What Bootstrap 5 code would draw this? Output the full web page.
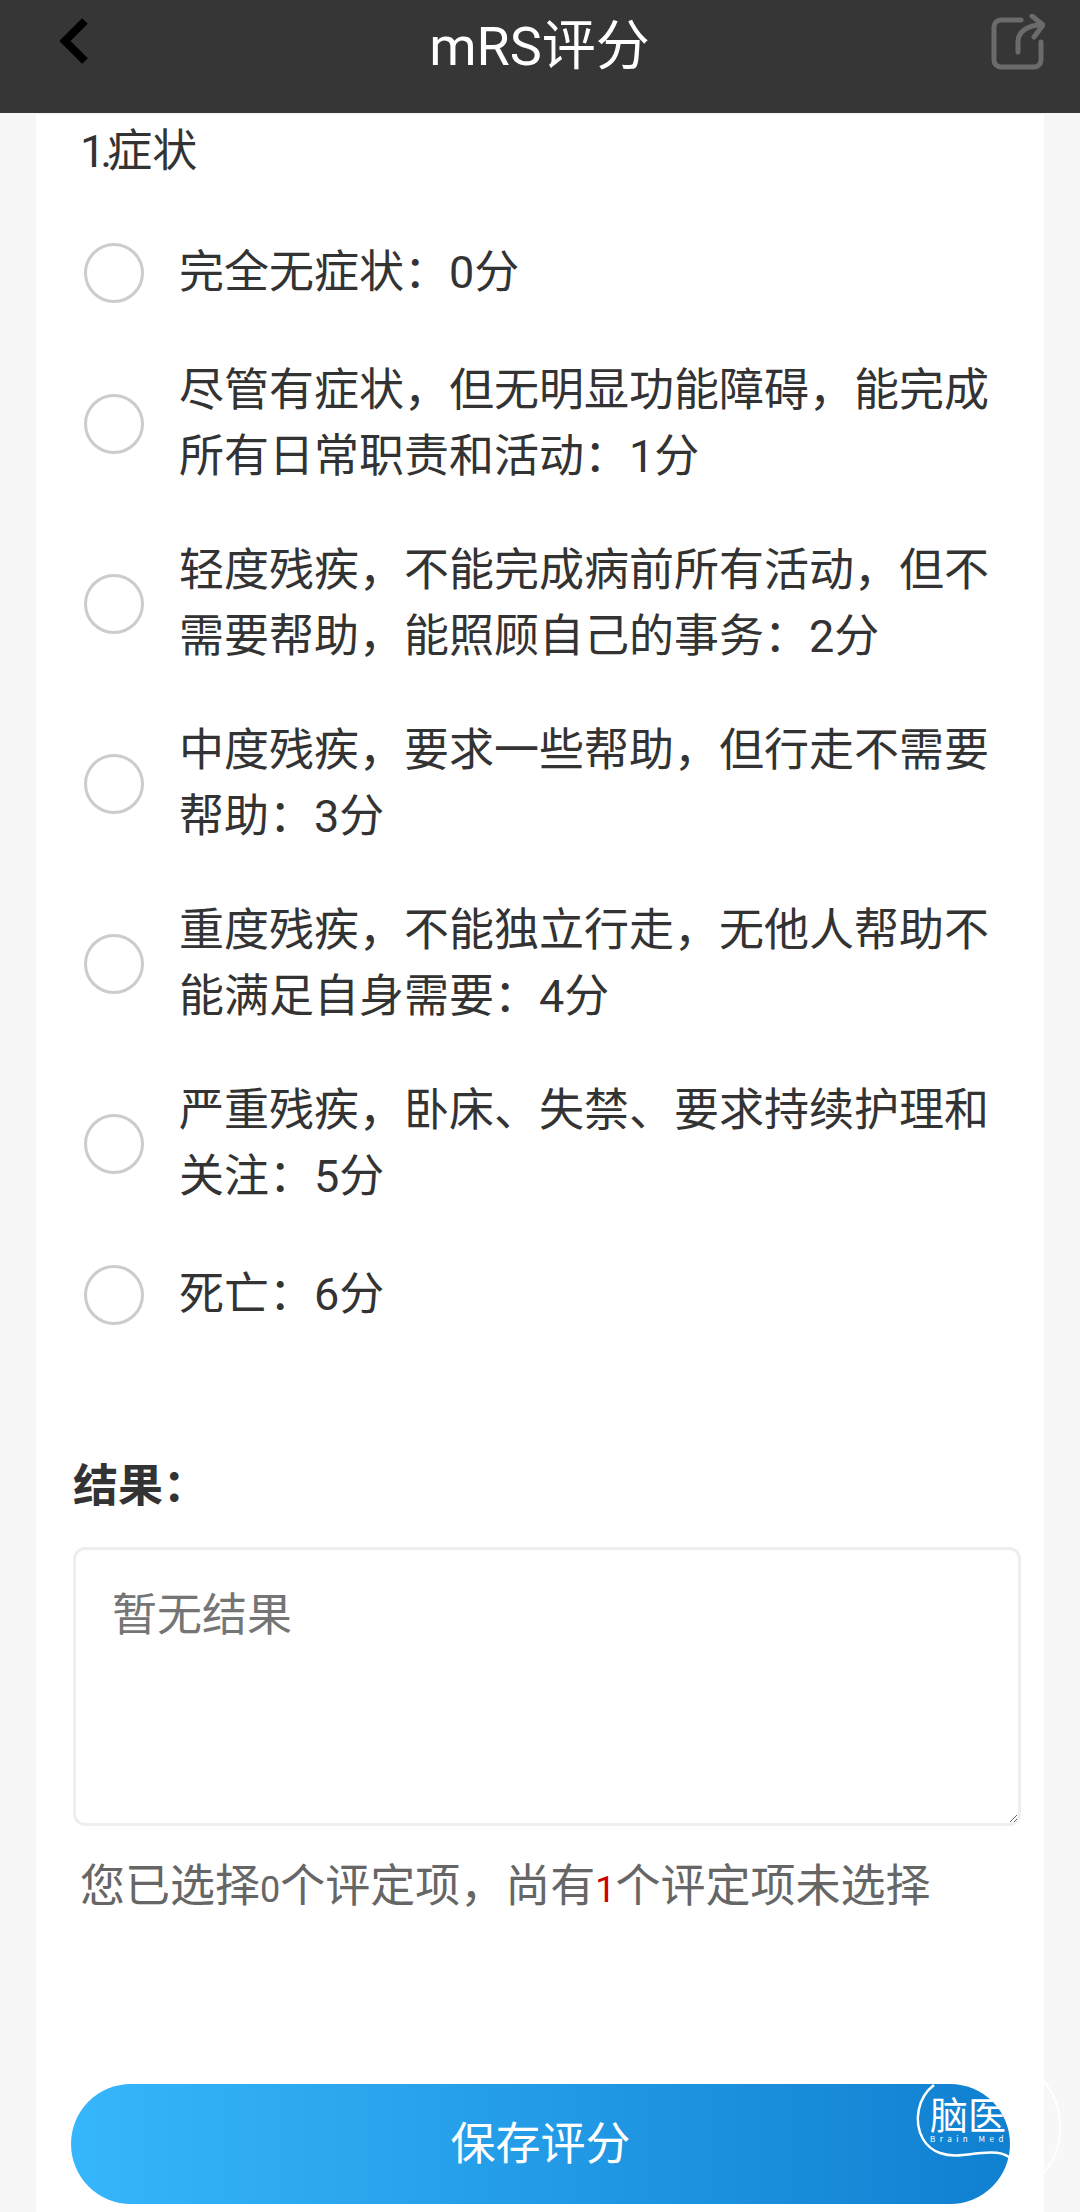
<!DOCTYPE html>
<html lang="zh-CN">
<head>
    <meta charset="UTF-8">
    <meta name="viewport" content="width=device-width, initial-scale=1.0">
    <title>mRS评分</title>
    <link href="https://cdn.jsdelivr.net/npm/bootstrap@5.3.0/dist/css/bootstrap.min.css" rel="stylesheet">
    <style>
        body {
            background: #f7f7f7;
            font-family: Roboto, "Noto Sans CJK SC", sans-serif;
            font-size: 45px;
            line-height: 66px;
            color: #333;
            position: relative;
            height: 2212px;
            overflow: hidden;
        }
        .top-bar {
            background: #363636;
            height: 113px;
            padding: 14px 35px 0 60px;
        }
        .top-title {
            color: #fff;
            font-size: 54px;
            font-weight: 400;
            line-height: 66px;
            margin: 0;
        }
        .sheet {
            background: #fff;
            margin: 2px 36px 0;
            height: 2097px;
            padding-top: 4px;
        }
        .q-title {
            margin: 0 0 27px 44px;
            font-size: 45px;
            font-weight: 400;
            line-height: 66px;
        }
        .q-num {
            letter-spacing: -5px;
        }
        .opt-row {
            min-height: 122px;
            padding: 24px 44px 24px 48px;
            gap: 35px;
        }
        .opt-row .form-check-input {
            width: 60px;
            height: 60px;
            margin: 0;
            flex: none;
            border: 3px solid #ccc;
        }
        .res-label {
            margin: 98px 0 27px 37px;
            font-size: 45px;
            font-weight: 700;
            line-height: 66px;
        }
        .res-box {
            display: block;
            margin-left: 37px;
            width: 948px;
            height: 279px;
            padding: 33px 36px;
            border: 3px solid #eee;
            border-radius: 12px;
            font-size: 45px;
            line-height: 66px;
        }
        .res-box::placeholder {
            color: #757575;
        }
        .res-note {
            margin: 28px 0 0 44px;
            font-size: 45px;
            line-height: 66px;
            color: #666;
        }
        .res-note .num {
            font-size: 36px;
        }
        .res-note .num-red {
            color: #c00;
        }
        .save-btn {
            display: block;
            margin: 161px 0 0 35px;
            width: 939px;
            height: 120px;
            border: 0;
            border-radius: 60px;
            padding-top: 2px;
            padding-bottom: 0;
            background: linear-gradient(90deg, #36b6fc 0%, #1080d0 100%);
            color: #fff;
            font-size: 45px;
        }
        .float-logo {
            position: absolute;
            left: 910px;
            top: 2075px;
            pointer-events: none;
        }
        .float-logo text {
            fill: #fff;
            font-family: "Noto Sans CJK SC", sans-serif;
        }
    </style>
</head>
<body>
    <!-- Header -->
    <header class="top-bar d-flex justify-content-between align-items-start">
        <svg width="28" height="46" viewBox="0 0 28 46" class="mt-1" fill="none" stroke="#000" stroke-width="8">
            <path d="M25 3 5 23l20 20"/>
        </svg>
        <h1 class="top-title">mRS评分</h1>
        <svg width="54" height="56" viewBox="0 0 54 56" fill="none" stroke="#6b6b6b" stroke-width="5" stroke-linecap="round" stroke-linejoin="round">
            <path d="M30 6H10a7 7 0 0 0-7 7v33a7 7 0 0 0 7 7h33a7 7 0 0 0 7-7V28"/>
            <path d="M27 38V28c0-10 9-17 24-17"/>
            <path d="M41 2l11 9-9 12"/>
        </svg>
    </header>

    <main class="sheet">
        <h2 class="q-title"><span class="q-num">1.</span>症状</h2>

        <div id="optList"></div>

        <div class="res-label">结果：</div>
        <textarea class="form-control res-box" placeholder="暂无结果"></textarea>
        <p class="res-note">您已选择<span class="num">0</span>个评定项，尚有<span class="num num-red">1</span>个评定项未选择</p>

        <button type="button" class="btn save-btn">保存评分</button>
    </main>

    <!-- Floating logo -->
    <svg class="float-logo" width="160" height="110" viewBox="0 0 160 110" fill="none">
        <path d="M130 2A72 72 0 0 1 130 102" stroke="#fff" stroke-width="2"/>
        <path d="M24 10C8 22 3 46 13 64c8 14 24 18 40 16 18-2 36-5 46 2 3 2 4 4 5 6" stroke="#fff" stroke-width="2.5"/>
        <text x="20" y="54" font-size="38">脑医</text>
        <text x="20" y="67" font-size="8" letter-spacing="4.5">Brain Med</text>
    </svg>

    <script src="https://cdn.jsdelivr.net/npm/bootstrap@5.3.0/dist/js/bootstrap.bundle.min.js"></script>
    <script>
        // Options of the single mRS item
        const options = [
            '完全无症状：0分',
            '尽管有症状，但无明显功能障碍，能完成所有日常职责和活动：1分',
            '轻度残疾，不能完成病前所有活动，但不需要帮助，能照顾自己的事务：2分',
            '中度残疾，要求一些帮助，但行走不需要帮助：3分',
            '重度残疾，不能独立行走，无他人帮助不能满足自身需要：4分',
            '严重残疾，卧床、失禁、要求持续护理和关注：5分',
            '死亡：6分'
        ];

        document.getElementById('optList').innerHTML = options.map((text, i) => `
            <div class="opt-row d-flex align-items-center">
                <input class="form-check-input" type="radio" name="mrs" id="opt${i}">
                <label class="form-check-label" for="opt${i}">${text}</label>
            </div>
        `).join('');
    </script>
</body>
</html>
